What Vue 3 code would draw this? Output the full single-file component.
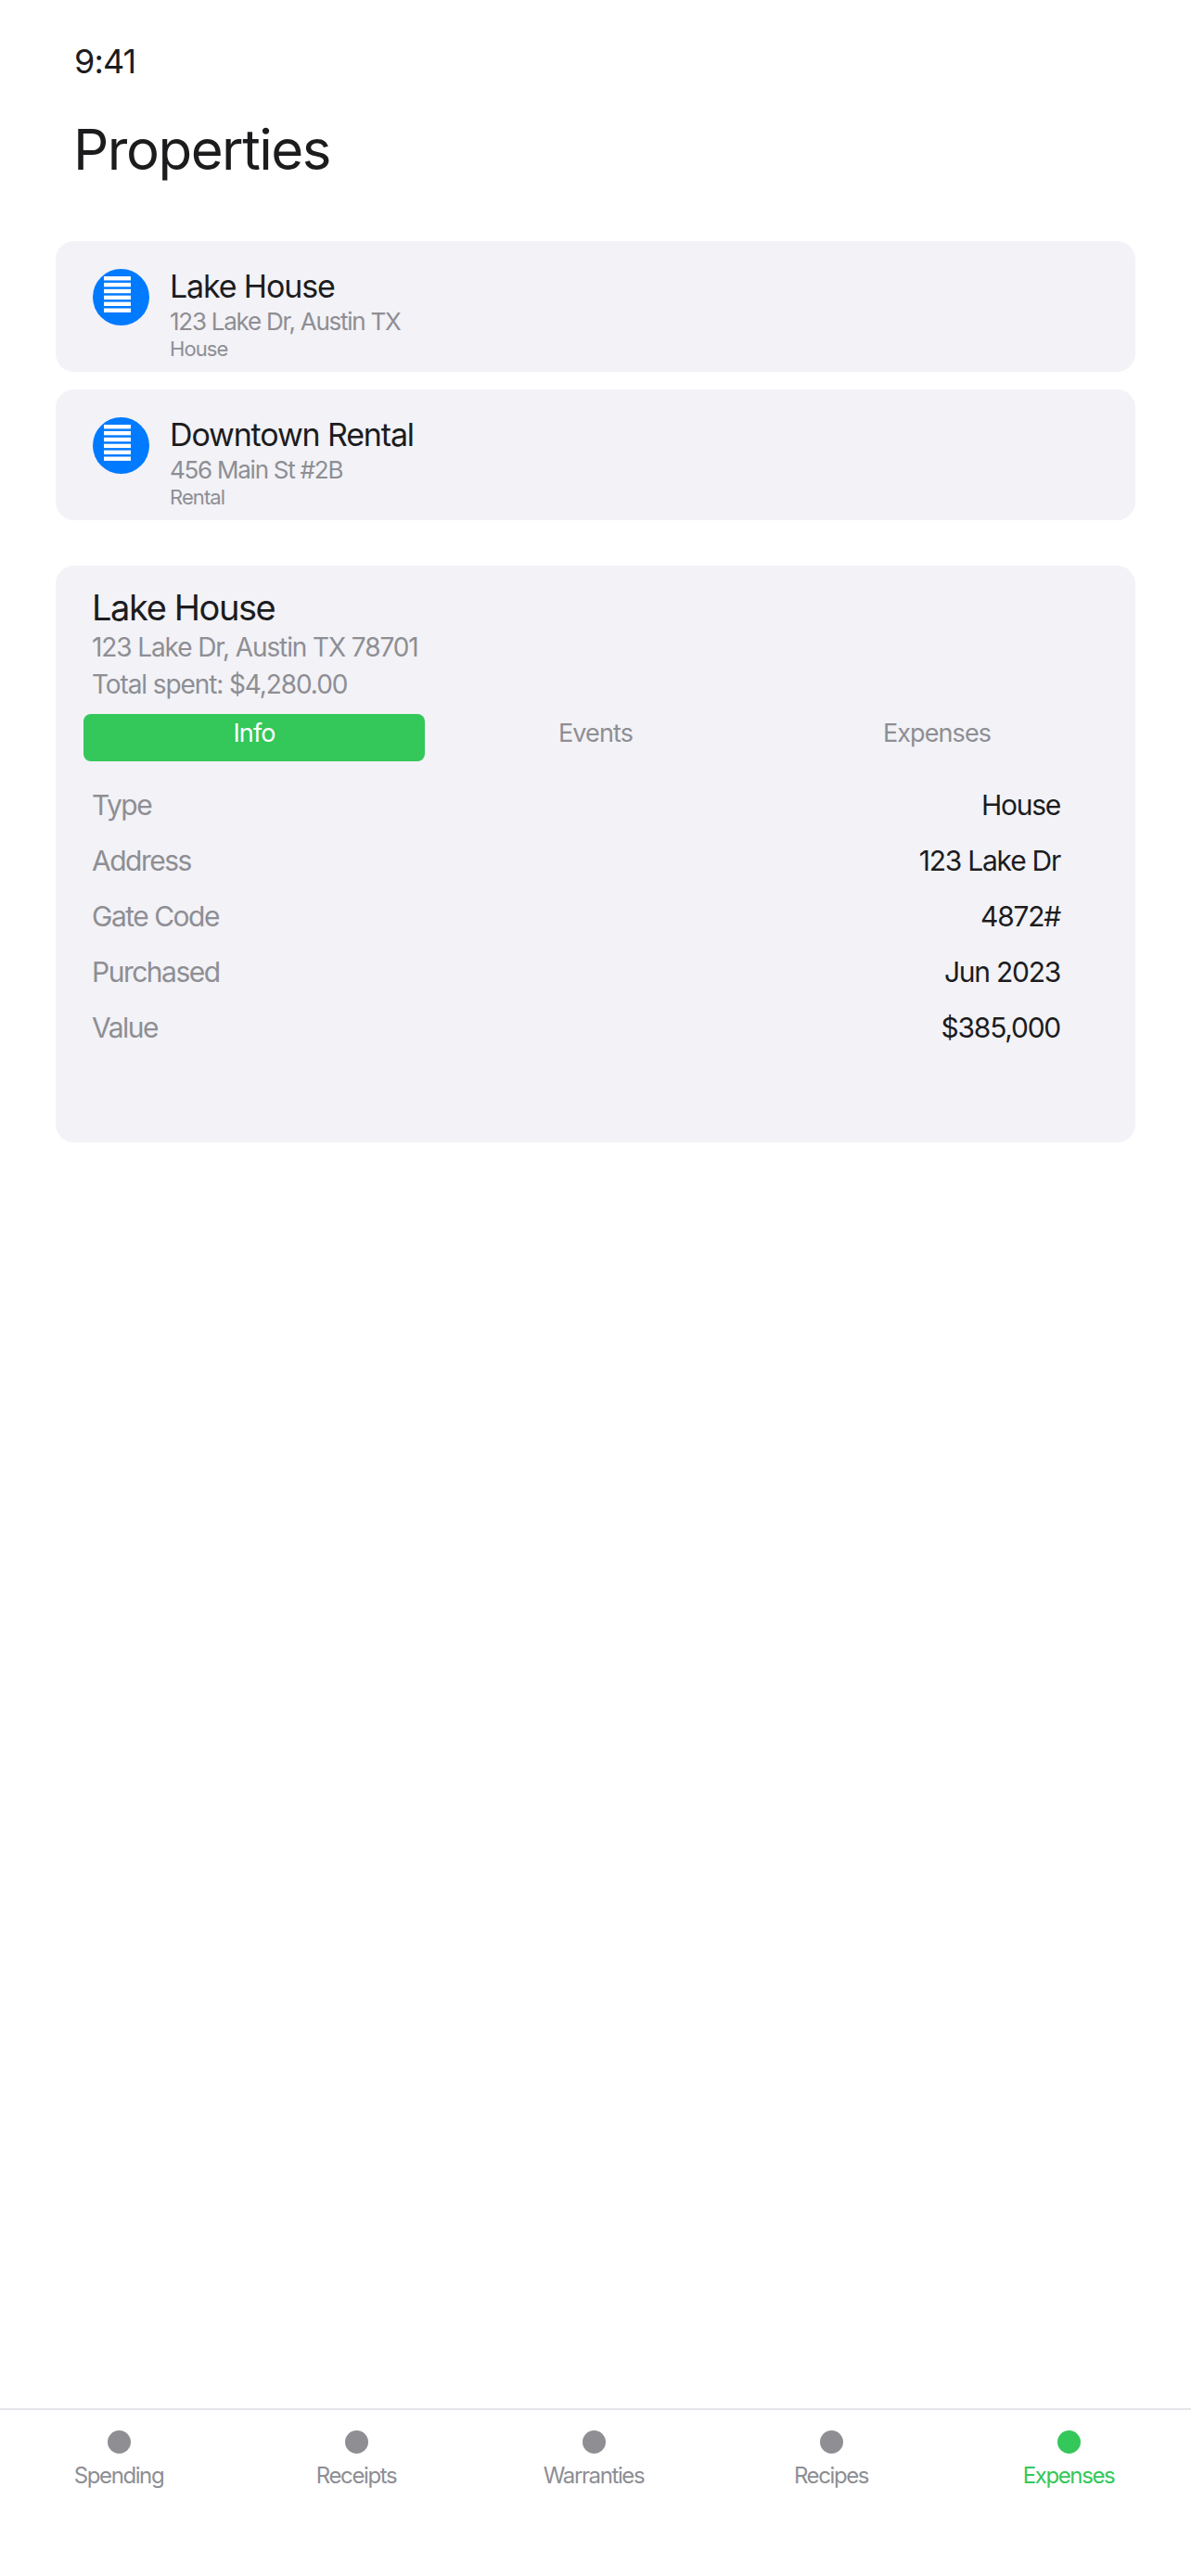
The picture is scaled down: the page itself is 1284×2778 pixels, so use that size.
<script setup>
const properties = [
  { name: 'Lake House', address: '123 Lake Dr, Austin TX', kind: 'House' },
  { name: 'Downtown Rental', address: '456 Main St #2B', kind: 'Rental' }
]

const tabs = ['Info', 'Events', 'Expenses']

const rows = [
  { label: 'Type', value: 'House' },
  { label: 'Address', value: '123 Lake Dr' },
  { label: 'Gate Code', value: '4872#' },
  { label: 'Purchased', value: 'Jun 2023' },
  { label: 'Value', value: '$385,000' }
]

const navItems = ['Spending', 'Receipts', 'Warranties', 'Recipes', 'Expenses']
const bars = [0, 1, 2, 3, 4, 5]
</script>

<template>
  <div class="screen">
    <div class="status-time">9:41</div>
    <h1 class="page-title">Properties</h1>

    <div class="property-list">
      <div v-for="item in properties" :key="item.name" class="property-card">
        <div class="property-icon">
          <svg width="29" height="39" viewBox="0 0 29 39">
            <rect v-for="n in bars" :key="n" x="0" :y="n * 6.9" width="29" height="4.4" fill="#fff" />
          </svg>
        </div>
        <div class="property-text">
          <div class="property-name">{{ item.name }}</div>
          <div class="property-address">{{ item.address }}</div>
          <div class="property-kind">{{ item.kind }}</div>
        </div>
      </div>
    </div>

    <div class="detail-card">
      <div class="detail-head">
        <div class="detail-name">Lake House</div>
        <div class="detail-sub">123 Lake Dr, Austin TX 78701</div>
        <div class="detail-sub">Total spent: $4,280.00</div>
      </div>
      <div class="tabs">
        <div v-for="(tab, i) in tabs" :key="tab" class="tab" :class="{ active: i === 0 }">{{ tab }}</div>
      </div>
      <div class="rows">
        <div v-for="row in rows" :key="row.label" class="row">
          <span class="row-label">{{ row.label }}</span>
          <span class="row-value">{{ row.value }}</span>
        </div>
      </div>
    </div>

    <nav class="tab-bar">
      <div v-for="(item, i) in navItems" :key="item" class="nav-item" :class="{ active: i === 4 }">
        <span class="nav-dot"></span>
        <span class="nav-label">{{ item }}</span>
      </div>
    </nav>
  </div>
</template>

<style>
html,
body {
  background: #fff;
}
</style>

<style scoped>
.screen {
  height: 2778px;
  display: flex;
  flex-direction: column;
  box-sizing: border-box;
  padding-top: 44px;
  background: #fff;
  color: #1c1c1e;
  font-family: Inter, "Liberation Sans", sans-serif;
  overflow: hidden;
}

.status-time {
  padding-left: 80px;
  font-size: 36px;
  line-height: 44px;
  letter-spacing: -0.9px;
}

.page-title {
  margin: 37px 0 0;
  padding-left: 79px;
  font-size: 60px;
  line-height: 72px;
  font-weight: 400;
  letter-spacing: -1.5px;
}

.property-list {
  display: flex;
  flex-direction: column;
  gap: 19px;
  margin: 63px 60px 0;
}

.property-card {
  display: flex;
  gap: 22px;
  height: 141px;
  padding: 30px 40px 0;
  box-sizing: border-box;
  background: #f2f2f7;
  border-radius: 20px;
}

.property-icon {
  flex-shrink: 0;
  width: 61px;
  height: 61px;
  box-sizing: border-box;
  padding: 0 8px 6px 0;
  border-radius: 50%;
  background: #007aff;
  display: flex;
  align-items: center;
  justify-content: center;
}

.property-name {
  margin-top: -1px;
  font-size: 34px;
  line-height: 40px;
  letter-spacing: -1.15px;
}

.property-address {
  margin-top: 2px;
  font-size: 26px;
  line-height: 32px;
  letter-spacing: -1.25px;
  color: #8e8e93;
}

.property-kind {
  font-size: 22px;
  line-height: 26px;
  letter-spacing: -0.9px;
  color: #8e8e93;
}

.detail-card {
  margin: 49px 60px 0;
  height: 622px;
  box-sizing: border-box;
  padding: 22px 30px 0;
  background: #f2f2f7;
  border-radius: 20px;
}

.detail-head {
  padding-left: 9px;
}

.detail-name {
  font-size: 38px;
  line-height: 46px;
  letter-spacing: -1.4px;
}

.detail-sub {
  margin-top: 6px;
  font-size: 28px;
  line-height: 34px;
  letter-spacing: -1.1px;
  color: #8e8e93;
}

.detail-name + .detail-sub {
  margin-top: 3px;
}

.tabs {
  display: grid;
  grid-template-columns: repeat(3, 1fr);
  margin-top: 15px;
}

.tab {
  height: 51px;
  line-height: 41px;
  text-align: center;
  font-size: 27px;
  letter-spacing: -0.9px;
  color: #8e8e93;
  border-radius: 8px;
}

.tab.active {
  background: #34c759;
  color: #fff;
}

.rows {
  display: flex;
  flex-direction: column;
  gap: 22px;
  margin-top: 28px;
  padding: 0 51px 0 9px;
}

.row {
  display: flex;
  justify-content: space-between;
  font-size: 30px;
  line-height: 38px;
}

.row-label {
  color: #8e8e93;
  letter-spacing: -1.5px;
}

.row-value {
  letter-spacing: -1.25px;
}

.tab-bar {
  margin-top: auto;
  height: 181px;
  box-sizing: border-box;
  padding: 22px 4px 0 0;
  display: grid;
  grid-template-columns: repeat(5, 1fr);
  border-top: 2px solid #e5e5ea;
}

.nav-item {
  display: flex;
  flex-direction: column;
  align-items: center;
  gap: 9px;
  color: #8e8e93;
}

.nav-dot {
  width: 25px;
  height: 25px;
  border-radius: 50%;
  background: #8e8e93;
}

.nav-label {
  font-size: 24px;
  line-height: 30px;
  letter-spacing: -1.4px;
}

.nav-item.active {
  color: #34c759;
}

.nav-item.active .nav-dot {
  background: #34c759;
}
</style>
